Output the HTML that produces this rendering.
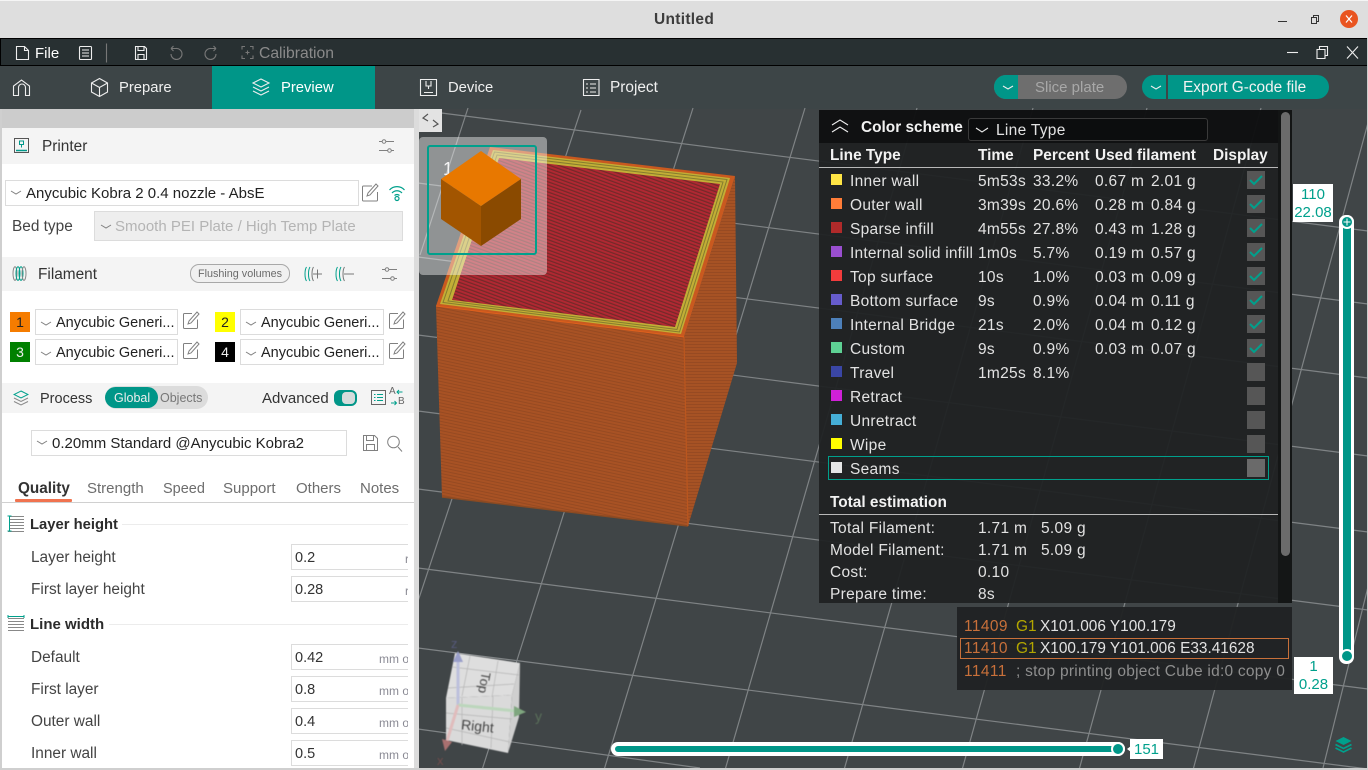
<!DOCTYPE html>
<html><head><meta charset="utf-8"><title>Untitled</title>
<style>
html,body{margin:0;padding:0;width:1368px;height:770px;overflow:hidden;background:#dedede}
body{position:relative;font-family:"Liberation Sans","DejaVu Sans",sans-serif;font-size:15px;color:#333}
div,span,svg{position:absolute;box-sizing:border-box}
.t{height:20px;line-height:20px;white-space:nowrap;margin-top:2px}
.nav{color:#f0f0f0;font-size:14.8px}
.box{background:#fff;border:1px solid #dcdcdc}
.band{left:2px;width:412px;background:#f4f4f4}
.i{fill:none;stroke:#808080;stroke-width:1;overflow:visible}
.w{fill:none;stroke:#eee;stroke-width:1.1;overflow:visible}
.d{color:#e2e2e2;font-size:15.5px;letter-spacing:.3px}
.g{font-size:15.4px;color:#e2e2e2}
.n{font-size:15.5px;letter-spacing:.4px;color:#c8703a}
.b{font-weight:bold;color:#f2f2f2;font-size:15.4px}
.sw{left:831px;width:11px;height:11px}
.cb{left:1247px;width:18px;height:18px;background:#565656}
.f{left:291px;width:117px;height:26px;border:1px solid #dcdcdc;border-right:0;background:#fff;overflow:hidden}
.f b{position:absolute;left:3px;top:3px;font-weight:normal;font-size:14.5px;line-height:20px;color:#333}
.f i{position:absolute;left:87px;top:6px;font-style:normal;font-size:12px;line-height:16px;color:#8a8a94;white-space:nowrap}
.l{color:#444;font-size:15.4px}
.sq{width:20px;height:20px;text-align:center;line-height:20px;font-size:14px}
.tab{color:#6d6d6d}
.c{font-size:14.5px;color:#222}
</style></head>
<body>
<!-- title bar -->
<div style="left:0;top:0;width:1368px;height:1px;background:#f5f5f5"></div>
<div class="t" style="left:654px;top:8px;font-weight:bold;font-size:15.500px;letter-spacing:.3px;color:#3d3d3d">Untitled</div>
<svg style="left:1276px;top:14px;width:52px;height:14px;fill:none;stroke:#333;stroke-width:1" viewBox="0 0 52 14"><path d="M2 7.500h9"/><path d="M35.500 3.500h5v6h-5zM37.500 3.500v-2h5v6h-2"/></svg>
<div style="left:1340px;top:10px;width:18px;height:18px;border-radius:50%;background:#e95420"></div>
<svg style="left:1340px;top:10px;width:18px;height:18px" viewBox="0 0 18 18"><path d="M6 5.500l6 7M12 5.500l-6 7" stroke="#fff" stroke-width="1.2" fill="none"/></svg>

<!-- menu bar -->
<div style="left:0;top:38px;width:1368px;height:28px;background:#283032;border:1px solid #000"></div>
<svg class="w" style="left:0;top:38px;width:340px;height:28px" viewBox="0 0 340 28">
<path d="M16.500 21.500V8.500h8l4 4v9zM24.500 8.500v4h4"/>
<rect x="79.500" y="8.500" width="12" height="13" rx="1"/><path d="M82 12h7M82 15h7M82 18h7"/>
<path d="M106.500 5.500v19" stroke="#777"/>
<path d="M135.500 8.500h9l2 2v11h-11zM138 8.500v4h6v-4M138 21.500v-5h6v5"/>
<g stroke="#777"><path d="M171 10.500h5a5.500 5.500 0 1 1-5 5.500M171 10.500l2.500-2.500M171 10.500l2.500 2.500"/><path d="M216 10.500h-5a5.500 5.500 0 1 0 5 5.500M216 10.500l-2.500-2.500M216 10.500l-2.500 2.500"/>
<path d="M242 11.500v-3h3M250 8.500h3v3M253 17.500v3h-3M245 20.500h-3v-3M247.500 12.500v4M245.500 14.500h4"/></g>
</svg>
<div class="t" style="left:35px;top:42px;color:#fff;font-size:15px">File</div>
<div class="t" style="left:259px;top:42px;color:#8a8a8a;font-size:15.700px">Calibration</div>
<svg class="w" style="left:1280px;top:38px;width:88px;height:28px" viewBox="0 0 88 28"><path d="M7 14.500h11"/><path d="M37 11.500h8v9h-8zM39.500 11.500v-3h8v9h-2.500"/><path d="M67 8.500l11 12M78 8.500l-11 12"/></svg>

<!-- nav -->
<div style="left:0;top:66px;width:1368px;height:43px;background:#3d4547"></div>
<div style="left:212px;top:66px;width:163px;height:43px;background:#009688"></div>
<svg class="w" style="left:0;top:66px;width:640px;height:43px" viewBox="0 0 640 43">
<path d="M13.500 29.500V20l8-6 8 6v9.500h-4v-8a3.500 3.500 0 0 0-7 0v8z"/>
<path d="M99.500 12.500l8 4.500v9l-8 4.500-8-4.500v-9zM91.500 17l8 4.500 8-4.500M99.500 21.500v9"/>
<path d="M261 13l8 4-8 4-8-4zM253 21l8 4 8-4M253 25l8 4 8-4"/>
<path d="M420.500 13.500h16v16h-16zM424 26.500h9M426 15v5h5v-5M428.500 20v3"/>
<path d="M583.500 13.500h15.500v16h-15.500zM586 18h2M590 18h6M586 22h2M590 22h6M586 26h2M590 26h6"/>
</svg>
<div class="t nav" style="left:119px;top:76px">Prepare</div>
<div class="t nav" style="left:281px;top:76px;color:#fff">Preview</div>
<div class="t nav" style="left:448px;top:76px">Device</div>
<div class="t nav" style="left:610px;top:76px;font-size:15.400px">Project</div>
<!-- buttons -->
<div style="left:994px;top:75px;width:133px;height:24px;border-radius:12px;background:#6e6e6e"></div>
<div style="left:994px;top:75px;width:24px;height:24px;border-radius:12px 0 0 12px;background:#009688"></div>
<div class="t" style="left:1035px;top:76px;color:#a8a8a8">Slice plate</div>
<div style="left:1142px;top:75px;width:187px;height:24px;border-radius:12px;background:#009688"></div>
<div style="left:1166px;top:75px;width:2px;height:24px;background:#3d4547"></div>
<div class="t" style="left:1183px;top:76px;color:#f2f2f2;font-size:15.400px">Export G-code file</div>
<svg class="w" style="left:990px;top:75px;width:190px;height:24px" viewBox="0 0 190 24"><path d="M13 11l5 3 5-3M161 11l5 3 5-3"/></svg>

<!-- viewport -->
<div style="left:418px;top:109px;width:950px;height:659px;background:#404547;overflow:hidden"></div>
<svg style="left:0;top:0;width:1368px;height:770px" viewBox="0 0 1368 770">
<defs>
<pattern id="red" width="3.2" height="3.2" patternUnits="userSpaceOnUse" patternTransform="rotate(20)"><rect width="3.2" height="3.2" fill="#b02832"/><rect y="2" width="3.2" height="1.2" fill="#742929"/></pattern>
<pattern id="fr" width="4" height="3" patternUnits="userSpaceOnUse" patternTransform="rotate(12)"><rect width="4" height="3" fill="#a85224"/><rect y="2" width="4" height="1" fill="#964a22"/></pattern>
<pattern id="rt" width="3" height="3" patternUnits="userSpaceOnUse"><rect width="3" height="3" fill="#a65224"/><rect y="2" width="3" height="1" fill="#974a22"/></pattern>
</defs>
<g stroke="#7f8385" stroke-width="1.2" fill="none">
<path d="M418 110L1368 231M418 183L1368 304M418 257L1368 378M418 335L1368 456M418 411L1368 532M418 489L1368 610M418 568L1368 689M418 648L1368 769M418 729L700 768"/>
<path d="M468 108L420 255M581 110L362 770M693 108L482 770M805 108L604 770M917 108L725 770M1033 108L844 770M1147 108L962 770M1261 108L1079 770M1372 108L1193 770M1487 108L1323 768"/>
</g>
<!-- printed cube -->
<polygon points="436,306 684,337 688,526 442,497" fill="url(#fr)"/>
<polygon points="684,337 735,176 737,363 688,526" fill="url(#rt)"/>
<path d="M442 497L688 526" stroke="#8a4a22" stroke-width="1.500"/>
<polygon points="490,147 735,176 684,337 436,306" fill="#c9591f"/>
<polygon points="493,150 730,178 681,334 440,304" fill="#c2ae36"/>
<polygon points="494.500,152 727,179.500 679.500,332 443,302.500" fill="none" stroke="#857c2e" stroke-width="1"/>
<polygon points="497,155 723,182 677,329.500 448,301" fill="none" stroke="#857c2e" stroke-width="1"/>
<polygon points="499,158 720,184 675,327 452,300" fill="url(#red)"/>
<path d="M684 337L688 526" stroke="#bb561e" stroke-width="1.200"/>
<path d="M436 306L684 337" stroke="#e0601c" stroke-width="1"/>
</svg>

<!-- thumbnail -->
<div style="left:419px;top:137px;width:128px;height:138px;background:rgba(255,255,255,.42);border-radius:4px"></div>
<div style="left:427px;top:145px;width:110px;height:110px;border:2px solid #00a08c;border-radius:3px"></div>
<div class="t" style="left:443px;top:157px;color:#f4f4f4;font-size:18px">1</div>
<svg style="left:0;top:0;width:600px;height:300px" viewBox="0 0 600 300">
<polygon points="481,151 521,179 481,206 441,179" fill="#e87800"/>
<polygon points="441,179 481,206 481,246 441,219" fill="#a25500"/>
<polygon points="521,179 481,206 481,246 521,219" fill="#8a4a00"/>
</svg>
<!-- collapse -->
<div style="left:419px;top:109px;width:23px;height:23px;background:#e3e3e3"></div>
<svg style="left:419px;top:109px;width:23px;height:23px;fill:none;stroke:#555;stroke-width:1.200" viewBox="0 0 23 23"><path d="M9 5L4 9l5 3M14 11l5 4-5 3"/></svg>

<!-- color scheme panel -->
<div style="left:819px;top:110px;width:473px;height:33px;background:rgba(14,16,17,.97)"></div>
<div style="left:819px;top:143px;width:473px;height:460px;background:rgba(32,34,35,.95)"></div>
<div style="left:1278px;top:110px;width:14px;height:493px;background:rgba(20,22,22,.96)"></div>
<div style="left:1281px;top:112px;width:9px;height:444px;background:#6b6b6b;border-radius:5px"></div>
<svg class="w" style="left:830px;top:118px;width:20px;height:16px" viewBox="0 0 20 16"><path d="M2 7l8-5 8 5M2 14l8-5 8 5"/></svg>
<div class="t b" style="left:861px;top:116px">Color scheme</div>
<div style="left:968px;top:118px;width:240px;height:23px;background:#0c0d0e;border:1px solid #3a3a3a;border-radius:3px"></div>
<svg class="w" style="left:974px;top:126px;width:16px;height:8px" viewBox="0 0 16 8"><path d="M2 2l6 4 6-4"/></svg>
<div class="t d" style="left:996px;top:119px">Line Type</div>

<div class="t b" style="left:830px;top:144px">Line Type</div>
<div class="t b" style="left:978px;top:144px">Time</div>
<div class="t b" style="left:1033px;top:144px">Percent</div>
<div class="t b" style="left:1095px;top:144px">Used filament</div>
<div class="t b" style="left:1213px;top:144px">Display</div>
<div style="left:819px;top:167px;width:459px;height:1px;background:#b8b8b8"></div>

<div class="sw" style="top:174px;background:#ffe545"></div><div class="t d" style="left:850px;top:170px">Inner wall</div><div class="t d" style="left:978px;top:170px">5m53s</div><div class="t d" style="left:1033px;top:170px">33.2%</div><div class="t d" style="left:1095px;top:170px">0.67 m</div><div class="t d" style="left:1151px;top:170px">2.01 g</div>
<div class="sw" style="top:198px;background:#ff7d38"></div><div class="t d" style="left:850px;top:194px">Outer wall</div><div class="t d" style="left:978px;top:194px">3m39s</div><div class="t d" style="left:1033px;top:194px">20.6%</div><div class="t d" style="left:1095px;top:194px">0.28 m</div><div class="t d" style="left:1151px;top:194px">0.84 g</div>
<div class="sw" style="top:222px;background:#b02a2a"></div><div class="t d" style="left:850px;top:218px">Sparse infill</div><div class="t d" style="left:978px;top:218px">4m55s</div><div class="t d" style="left:1033px;top:218px">27.8%</div><div class="t d" style="left:1095px;top:218px">0.43 m</div><div class="t d" style="left:1151px;top:218px">1.28 g</div>
<div class="sw" style="top:246px;background:#9a4fd0"></div><div class="t d" style="left:850px;top:242px;letter-spacing:.2px">Internal solid infill</div><div class="t d" style="left:978px;top:242px">1m0s</div><div class="t d" style="left:1033px;top:242px">5.7%</div><div class="t d" style="left:1095px;top:242px">0.19 m</div><div class="t d" style="left:1151px;top:242px">0.57 g</div>
<div class="sw" style="top:270px;background:#f23c3c"></div><div class="t d" style="left:850px;top:266px">Top surface</div><div class="t d" style="left:978px;top:266px">10s</div><div class="t d" style="left:1033px;top:266px">1.0%</div><div class="t d" style="left:1095px;top:266px">0.03 m</div><div class="t d" style="left:1151px;top:266px">0.09 g</div>
<div class="sw" style="top:294px;background:#665ccc"></div><div class="t d" style="left:850px;top:290px">Bottom surface</div><div class="t d" style="left:978px;top:290px">9s</div><div class="t d" style="left:1033px;top:290px">0.9%</div><div class="t d" style="left:1095px;top:290px">0.04 m</div><div class="t d" style="left:1151px;top:290px">0.11 g</div>
<div class="sw" style="top:318px;background:#4d80ba"></div><div class="t d" style="left:850px;top:314px">Internal Bridge</div><div class="t d" style="left:978px;top:314px">21s</div><div class="t d" style="left:1033px;top:314px">2.0%</div><div class="t d" style="left:1095px;top:314px">0.04 m</div><div class="t d" style="left:1151px;top:314px">0.12 g</div>
<div class="sw" style="top:342px;background:#5ed194"></div><div class="t d" style="left:850px;top:338px">Custom</div><div class="t d" style="left:978px;top:338px">9s</div><div class="t d" style="left:1033px;top:338px">0.9%</div><div class="t d" style="left:1095px;top:338px">0.03 m</div><div class="t d" style="left:1151px;top:338px">0.07 g</div>
<div class="sw" style="top:366px;background:#3a46a5"></div><div class="t d" style="left:850px;top:362px">Travel</div><div class="t d" style="left:978px;top:362px">1m25s</div><div class="t d" style="left:1033px;top:362px">8.1%</div>
<div class="sw" style="top:390px;background:#d020d8"></div><div class="t d" style="left:850px;top:386px">Retract</div>
<div class="sw" style="top:414px;background:#45aed6"></div><div class="t d" style="left:850px;top:410px">Unretract</div>
<div class="sw" style="top:438px;background:#ffff00"></div><div class="t d" style="left:850px;top:434px">Wipe</div>
<div class="sw" style="top:462px;background:#e6e6e6"></div><div class="t d" style="left:850px;top:458px">Seams</div>
<div style="left:828px;top:456px;width:441px;height:24px;border:1px solid #00a08c"></div>

<div class="cb" style="top:171px"></div><div class="cb" style="top:195px"></div><div class="cb" style="top:219px"></div><div class="cb" style="top:243px"></div><div class="cb" style="top:267px"></div><div class="cb" style="top:291px"></div><div class="cb" style="top:315px"></div><div class="cb" style="top:339px"></div><div class="cb" style="top:363px"></div><div class="cb" style="top:387px"></div><div class="cb" style="top:411px"></div><div class="cb" style="top:435px"></div><div class="cb" style="top:459px;background:#6a6a6a"></div>
<svg style="left:1247px;top:171px;width:18px;height:186px;fill:none;stroke:#00a08c;stroke-width:2" viewBox="0 0 18 186"><path d="M3 9l4 4 8-8M3 33l4 4 8-8M3 57l4 4 8-8M3 81l4 4 8-8M3 105l4 4 8-8M3 129l4 4 8-8M3 153l4 4 8-8M3 177l4 4 8-8"/></svg>

<div class="t b" style="left:830px;top:491px">Total estimation</div>
<div style="left:819px;top:514px;width:459px;height:1px;background:#b8b8b8"></div>
<div class="t d" style="left:830px;top:517px">Total Filament:</div><div class="t d" style="left:978px;top:517px">1.71 m</div><div class="t d" style="left:1041px;top:517px">5.09 g</div>
<div class="t d" style="left:830px;top:539px">Model Filament:</div><div class="t d" style="left:978px;top:539px">1.71 m</div><div class="t d" style="left:1041px;top:539px">5.09 g</div>
<div class="t d" style="left:830px;top:561px">Cost:</div><div class="t d" style="left:978px;top:561px">0.10</div>
<div class="t d" style="left:830px;top:583px">Prepare time:</div><div class="t d" style="left:978px;top:583px">8s</div>

<!-- gcode panel -->
<div style="left:957px;top:607px;width:335px;height:83px;background:rgba(32,34,35,.96)"></div>
<div style="left:960px;top:638px;width:329px;height:21px;border:1px solid #c8703a"></div>
<div class="t n" style="left:964px;top:615px">11409</div><div class="t" style="left:1016px;top:615px;color:#b3a600;font-size:15.400px">G1</div><div class="t g" style="left:1040px;top:615px">X101.006 Y100.179</div>
<div class="t n" style="left:964px;top:637px">11410</div><div class="t" style="left:1016px;top:637px;color:#b3a600;font-size:15.400px">G1</div><div class="t g" style="left:1040px;top:637px">X100.179 Y101.006 E33.41628</div>
<div class="t n" style="left:964px;top:660px">11411</div><div class="t" style="left:1016px;top:660px;color:#8e8e8e;font-size:15.500px;letter-spacing:.25px">; stop printing object Cube id:0 copy 0</div>

<!-- vertical slider -->
<div style="left:1339px;top:215px;width:15px;height:449px;background:#fff;border-radius:7px"></div>
<div style="left:1343px;top:222px;width:8px;height:434px;background:#009688"></div>
<div style="left:1340px;top:215px;width:14px;height:14px;border-radius:50%;background:#009688;border:2px solid #fff"></div>
<svg style="left:1340px;top:215px;width:14px;height:14px" viewBox="0 0 14 14"><path d="M3.500 7h7M7 3.500v7" stroke="#fff" stroke-width="1"/></svg>
<div style="left:1340px;top:649px;width:14px;height:14px;border-radius:50%;background:#009688;border:2px solid #fff"></div>
<div style="left:1293px;top:184px;width:40px;height:38px;background:#fff;color:#00a08c;text-align:center;line-height:18px;font-size:15px;padding-top:2px">110<br>22.08</div>
<div style="left:1294px;top:657px;width:39px;height:37px;background:#fff;color:#00a08c;text-align:center;line-height:18px;font-size:15px;padding-top:1px">1<br>0.28</div>

<!-- horizontal slider -->
<div style="left:611px;top:742px;width:514px;height:14px;background:#fff;border-radius:7px"></div>
<div style="left:615px;top:746px;width:500px;height:6px;background:#009688;border-radius:3px"></div>
<div style="left:1111px;top:742px;width:14px;height:14px;border-radius:50%;background:#009688;border:2px solid #fff"></div>
<div style="left:1130px;top:739px;width:33px;height:20px;background:#fff;color:#00a08c;text-align:center;line-height:21px;font-size:15px">151</div>
<svg style="left:1127px;top:746px;width:4px;height:6px" viewBox="0 0 4 6"><path d="M0 3l4-3v6z" fill="#fff"/></svg>
<svg style="left:1334px;top:736px;width:19px;height:18px" viewBox="0 0 19 18"><path d="M9.500 1l8 4-8 4-8-4z" fill="#00a08c"/><path d="M1.500 8.500l8 4 8-4M1.500 12l8 4 8-4" fill="none" stroke="#00a08c" stroke-width="1.600"/></svg>

<!-- nav cube -->
<svg style="left:420px;top:620px;width:180px;height:150px;overflow:visible;font-family:'Liberation Sans',sans-serif;filter:blur(.5px)" viewBox="0 0 180 150">
<polygon points="35,33 100,43 92,75 26,78" fill="#dedede"/>
<polygon points="26,78 92,75 88,133 26,120" fill="#dadada"/>
<polygon points="100,43 99,97 88,133 92,75" fill="#cfcfcf"/>
<g stroke="#b5b5b5" stroke-width=".7" fill="none"><path d="M28 68l66-4M32 47l67 8M50 36l-8 40M78 41l-6 36M26 93l66 6M26 108l64 14M42 78v47M73 76l-2 52"/></g>
<text x="60" y="62" font-size="13" fill="#444" transform="rotate(100 60 62)" text-anchor="middle">Top</text>
<text x="57" y="111" font-size="14" fill="#444" transform="rotate(6 57 111)" text-anchor="middle">Right</text>
<path d="M38 85V40" stroke="#bcc0dc" stroke-width="3"/><path d="M33 42l5-11 5 11z" fill="#9a9fca"/>
<path d="M38 85l58 6" stroke="#bcd6bc" stroke-width="3"/><path d="M94 86l12 6-12 5z" fill="#7fa67f"/>
<path d="M38 85l-11 36" stroke="#e0bcbc" stroke-width="3"/><path d="M22 119l10 3-7 9z" fill="#a97070"/>
<text x="31" y="28" font-size="13" fill="#55597a">z</text><text x="115" y="101" font-size="14" fill="#5a705a">y</text><text x="17" y="145" font-size="13" fill="#6f4c4c">x</text>
</svg>

<!-- left panel -->
<div style="left:0;top:109px;width:2px;height:661px;background:#cfcfcf"></div>
<div style="left:2px;top:109px;width:412px;height:659px;background:#fff"></div>
<div style="left:414px;top:109px;width:5px;height:659px;background:#dcdcdc"></div>
<div style="left:2px;top:109px;width:412px;height:19px;background:#cccccc"></div>
<div class="band" style="top:128px;height:36px"></div>
<div class="band" style="top:257px;height:34px"></div>
<div class="band" style="top:383px;height:30px"></div>

<svg style="left:14px;top:138px;width:16px;height:16px;fill:none;stroke:#00998a;stroke-width:1" viewBox="0 0 16 16"><path d="M.5.500h14v14H.5z" stroke="#555"/><path d="M2 12.500h11" stroke-width="1.500"/><path d="M5.500 3v3.500h4V3h-4zM7.500 6.500v3"/></svg>
<div class="t l" style="left:42px;top:135px;color:#333">Printer</div>
<svg class="i" style="left:379px;top:138px;width:16px;height:16px" viewBox="0 0 16 16"><path d="M0 3.500h3.500M6.500 3.500H15M0 12.500h9M12 12.500h3"/><circle cx="5" cy="3.500" r="1.800"/><circle cx="10.500" cy="12.500" r="1.800"/></svg>

<div class="box" style="left:5px;top:180px;width:354px;height:26px"></div>
<div class="t" style="left:26px;top:182px;color:#222">Anycubic Kobra 2 0.4 nozzle - AbsE</div>
<div class="t l" style="left:12px;top:215px">Bed type</div>
<div style="left:94px;top:211px;width:309px;height:30px;background:#eeeeee;border:1px solid #dcdcdc"></div>
<div class="t" style="left:115px;top:215px;color:#b4b4b4">Smooth PEI Plate / High Temp Plate</div>

<svg class="i" style="left:0;top:170px;width:420px;height:300px" viewBox="0 0 420 300">
<path d="M11 21l5 3 5-3M101 55l5 3 5-3M41 152l5 3 5-3M246 152l5 3 5-3M41 182l5 3 5-3M246 182l5 3 5-3M37 270l5 3 5-3"/>
<path d="M372 16h-8.500a1 1 0 0 0-1 1v13a1 1 0 0 0 1 1h13a1 1 0 0 0 1-1v-8M367 26l1-3 8-9 2 2-8 9z"/>
<path d="M192 143.500h-7.500a1 1 0 0 0-1 1v13a1 1 0 0 0 1 1h12a1 1 0 0 0 1-1v-8M188 154l1-3 8-9 2 2-8 9z"/>
<path d="M398 143.500h-7.500a1 1 0 0 0-1 1v13a1 1 0 0 0 1 1h12a1 1 0 0 0 1-1v-8M394 154l1-3 8-9 2 2-8 9z"/>
<path d="M192 173.500h-7.500a1 1 0 0 0-1 1v13a1 1 0 0 0 1 1h12a1 1 0 0 0 1-1v-8M188 184l1-3 8-9 2 2-8 9z"/>
<path d="M398 173.500h-7.500a1 1 0 0 0-1 1v13a1 1 0 0 0 1 1h12a1 1 0 0 0 1-1v-8M394 184l1-3 8-9 2 2-8 9z"/>
<path d="M363.500 265.500h11l3 3v12h-14zM366.500 265.500v5h7v-5M366.500 280.500v-6h8v6"/>
<circle cx="393.500" cy="272" r="5.800"/><path d="M398 277l4 4.500"/>
</svg>
<svg style="left:389px;top:184px;width:16px;height:18px;fill:none;stroke:#00a08c;stroke-width:1.200" viewBox="0 0 16 18"><path d="M.5 6c4-4.500 11-4.500 15 0M3 9c3-3 7-3 10 0M5.500 11.500c1.500-1.200 3.500-1.200 5 0"/><circle cx="8" cy="14.500" r="2"/></svg>

<svg style="left:12px;top:266px;width:15px;height:15px;fill:none;stroke-width:1" viewBox="0 0 15 15"><ellipse cx="3" cy="7.500" rx="2" ry="6.800" stroke="#888"/><ellipse cx="6" cy="7.500" rx="2" ry="6.800" stroke="#00a08c"/><ellipse cx="9" cy="7.500" rx="2" ry="6.800" stroke="#00a08c"/><ellipse cx="12" cy="7.500" rx="2" ry="6.800" stroke="#888"/></svg>
<div class="t l" style="left:38px;top:263px;color:#333">Filament</div>
<div style="left:190px;top:264px;width:100px;height:19px;border:1px solid #a8a8a8;border-radius:9px;background:#f0f0f0"></div>
<div class="t" style="left:198px;top:262px;font-size:10.800px;color:#6b6b6b">Flushing volumes</div>
<svg style="left:304px;top:266px;width:50px;height:16px;fill:none;stroke-width:1" viewBox="0 0 50 16"><path d="M2.500 1c-2 3-2 11 0 14M6 1c-2 3-2 11 0 14" stroke="#00a08c"/><path d="M9.500 1c-2 3-2 11 0 14M9 8h9M13.500 3.500v9" stroke="#777"/><path d="M33.500 1c-2 3-2 11 0 14M37 1c-2 3-2 11 0 14" stroke="#00a08c"/><path d="M40.500 1c-2 3-2 11 0 14M40 8h10" stroke="#777"/></svg>
<svg class="i" style="left:382px;top:266px;width:16px;height:16px" viewBox="0 0 16 16"><path d="M0 3.500h3.500M6.500 3.500H15M0 12.500h9M12 12.500h3"/><circle cx="5" cy="3.500" r="1.800"/><circle cx="10.500" cy="12.500" r="1.800"/></svg>

<div class="sq" style="left:10px;top:312px;background:#f57c00;color:#222">1</div>
<div class="sq" style="left:215px;top:312px;background:#ffff00;color:#222">2</div>
<div class="sq" style="left:10px;top:342px;background:#008000;color:#eee">3</div>
<div class="sq" style="left:215px;top:342px;background:#000;color:#eee">4</div>
<div class="box" style="left:35px;top:309px;width:143px;height:26px;background:transparent"></div>
<div class="box" style="left:240px;top:309px;width:144px;height:26px;background:transparent"></div>
<div class="box" style="left:35px;top:339px;width:143px;height:26px;background:transparent"></div>
<div class="box" style="left:240px;top:339px;width:144px;height:26px;background:transparent"></div>
<div class="t c" style="left:56px;top:311px">Anycubic Generi...</div>
<div class="t c" style="left:261px;top:311px">Anycubic Generi...</div>
<div class="t c" style="left:56px;top:341px">Anycubic Generi...</div>
<div class="t c" style="left:261px;top:341px">Anycubic Generi...</div>

<svg style="left:13px;top:390px;width:16px;height:16px;fill:none;stroke-width:1" viewBox="0 0 16 16"><path d="M8 1l7 3.500-7 3.500-7-3.500z" stroke="#00a08c"/><path d="M1 8l7 3.500L15 8M1 11.500L8 15l7-3.500" stroke="#888"/></svg>
<div class="t" style="left:40px;top:387px;font-size:14.500px">Process</div>
<div style="left:105px;top:386px;width:103px;height:23px;border-radius:12px;background:#dcdcdc"></div>
<div style="left:105px;top:387px;width:53px;height:21px;border-radius:11px;background:#009688"></div>
<div class="t" style="left:114px;top:386px;color:#eee;font-size:12.500px">Global</div>
<div class="t" style="left:160px;top:386px;color:#777;font-size:12.500px">Objects</div>
<div class="t" style="left:262px;top:387px;color:#333">Advanced</div>
<div style="left:334px;top:390px;width:23px;height:16px;border-radius:6px;background:#009688"></div>
<div style="left:342px;top:392px;width:13px;height:12px;border-radius:4px;background:#d5dcdc"></div>
<svg style="left:371px;top:389px;width:36px;height:18px;fill:none;stroke-width:1" viewBox="0 0 36 18"><path d="M.5 1.500h14v14H.5z" stroke="#666"/><path d="M3 5.500h1.500M6 5.500h6M3 8.500h1.500M6 8.500h6M3 11.500h1.500M6 11.500h6" stroke="#00a08c"/><path d="M26 3h5.500M28 1l-2 2 2 2M20 14h5.500M23.500 12l2 2-2 2" stroke="#00a08c"/></svg>
<div class="t" style="left:389px;top:380px;font-size:10px;color:#666">A</div>
<div class="t" style="left:398px;top:390px;font-size:10px;color:#666">B</div>

<div class="box" style="left:31px;top:430px;width:316px;height:26px"></div>
<svg class="i" style="left:31px;top:430px;width:24px;height:26px" viewBox="0 0 24 26"><path d="M6 11l5 3 5-3"/></svg>
<div class="t" style="left:52px;top:432px;color:#222">0.20mm Standard @Anycubic Kobra2</div>

<div class="t" style="left:18px;top:477px;font-weight:bold;color:#333;font-size:15.300px">Quality</div>
<div class="t tab" style="left:87px;top:477px">Strength</div>
<div class="t tab" style="left:163px;top:477px;font-size:14.500px">Speed</div>
<div class="t tab" style="left:223px;top:477px">Support</div>
<div class="t tab" style="left:296px;top:477px">Others</div>
<div class="t tab" style="left:360px;top:477px">Notes</div>
<div style="left:2px;top:502px;width:412px;height:1px;background:#d0d0d0"></div>
<div style="left:15px;top:499px;width:57px;height:3px;background:#f0734f;border-radius:1px"></div>

<svg style="left:7px;top:515px;width:18px;height:18px;fill:none;stroke-width:1" viewBox="0 0 18 18"><path d="M3 1.500h14M3 4.500h14M3 7.500h14M3 10.500h14M3 13.500h14M1 16.500h16" stroke="#888"/><path d="M2.500 1v15M.5 1h4M.5 16h4" stroke="#00a08c"/></svg>
<div class="t" style="left:30px;top:513px;font-weight:bold;color:#2c2c2c;font-size:14.800px">Layer height</div>
<div style="left:122px;top:524px;width:286px;height:1px;background:#ececec"></div>
<div class="t l" style="left:31px;top:546px">Layer height</div>
<div class="f" style="top:544px"><b>0.2</b><i style="left:113px">r</i></div>
<div class="t l" style="left:31px;top:578px">First layer height</div>
<div class="f" style="top:576px"><b>0.28</b><i style="left:113px">r</i></div>

<svg style="left:7px;top:615px;width:18px;height:18px;fill:none;stroke-width:1" viewBox="0 0 18 18"><path d="M1 3.500h16M1 6.500h16M1 9.500h16M1 12.500h16M1 15.500h16" stroke="#888"/><path d="M1 1.500h16M1 0v3M17 0v3" stroke="#00a08c"/></svg>
<div class="t" style="left:30px;top:613px;font-weight:bold;color:#2c2c2c">Line width</div>
<div style="left:109px;top:624px;width:299px;height:1px;background:#ececec"></div>
<div class="t l" style="left:31px;top:646px">Default</div>
<div class="f" style="top:644px"><b>0.42</b><i>mm o</i></div>
<div class="t l" style="left:31px;top:678px">First layer</div>
<div class="f" style="top:676px"><b>0.8</b><i>mm o</i></div>
<div class="t l" style="left:31px;top:710px">Outer wall</div>
<div class="f" style="top:708px"><b>0.4</b><i>mm o</i></div>
<div class="t l" style="left:31px;top:742px">Inner wall</div>
<div class="f" style="top:740px"><b>0.5</b><i>mm o</i></div>

<div style="left:0;top:768px;width:1368px;height:2px;background:#cfcfcf"></div>
<div style="left:1367px;top:38px;width:1px;height:732px;background:#cfcfcf"></div>
</body></html>
